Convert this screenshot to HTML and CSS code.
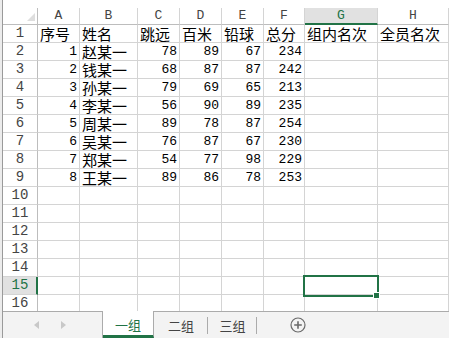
FILE: index.html
```html
<!DOCTYPE html>
<html>
<head>
  <title>Sheet</title>
  <link rel="stylesheet" href="styles.css">
</head>
<body>
  <div class="app">
    <div class="edge"></div>
    <div class="main">
      <div class="sheet">
        <div class="corner"><span class="tri"></span></div><div class="ch">A</div><div class="ch">B</div><div class="ch">C</div><div class="ch">D</div><div class="ch">E</div><div class="ch">F</div><div class="ch on">G</div><div class="ch">H</div>

        <div class="rh">1</div><div class="c t">序号</div><div class="c t">姓名</div><div class="c t">跳远</div><div class="c t">百米</div><div class="c t">铅球</div><div class="c t">总分</div><div class="c t">组内名次</div><div class="c t">全员名次</div>
        <div class="rh">2</div><div class="c n">1</div><div class="c t">赵某一</div><div class="c n">78</div><div class="c n">89</div><div class="c n">67</div><div class="c n">234</div><div class="c"></div><div class="c"></div>
        <div class="rh">3</div><div class="c n">2</div><div class="c t">钱某一</div><div class="c n">68</div><div class="c n">87</div><div class="c n">87</div><div class="c n">242</div><div class="c"></div><div class="c"></div>
        <div class="rh">4</div><div class="c n">3</div><div class="c t">孙某一</div><div class="c n">79</div><div class="c n">69</div><div class="c n">65</div><div class="c n">213</div><div class="c"></div><div class="c"></div>
        <div class="rh">5</div><div class="c n">4</div><div class="c t">李某一</div><div class="c n">56</div><div class="c n">90</div><div class="c n">89</div><div class="c n">235</div><div class="c"></div><div class="c"></div>
        <div class="rh">6</div><div class="c n">5</div><div class="c t">周某一</div><div class="c n">89</div><div class="c n">78</div><div class="c n">87</div><div class="c n">254</div><div class="c"></div><div class="c"></div>
        <div class="rh">7</div><div class="c n">6</div><div class="c t">吴某一</div><div class="c n">76</div><div class="c n">87</div><div class="c n">67</div><div class="c n">230</div><div class="c"></div><div class="c"></div>
        <div class="rh">8</div><div class="c n">7</div><div class="c t">郑某一</div><div class="c n">54</div><div class="c n">77</div><div class="c n">98</div><div class="c n">229</div><div class="c"></div><div class="c"></div>
        <div class="rh">9</div><div class="c n">8</div><div class="c t">王某一</div><div class="c n">89</div><div class="c n">86</div><div class="c n">78</div><div class="c n">253</div><div class="c"></div><div class="c"></div>
        <div class="rh">10</div><div class="c"></div><div class="c"></div><div class="c"></div><div class="c"></div><div class="c"></div><div class="c"></div><div class="c"></div><div class="c"></div>
        <div class="rh">11</div><div class="c"></div><div class="c"></div><div class="c"></div><div class="c"></div><div class="c"></div><div class="c"></div><div class="c"></div><div class="c"></div>
        <div class="rh">12</div><div class="c"></div><div class="c"></div><div class="c"></div><div class="c"></div><div class="c"></div><div class="c"></div><div class="c"></div><div class="c"></div>
        <div class="rh">13</div><div class="c"></div><div class="c"></div><div class="c"></div><div class="c"></div><div class="c"></div><div class="c"></div><div class="c"></div><div class="c"></div>
        <div class="rh">14</div><div class="c"></div><div class="c"></div><div class="c"></div><div class="c"></div><div class="c"></div><div class="c"></div><div class="c"></div><div class="c"></div>
        <div class="rh on">15</div><div class="c"></div><div class="c"></div><div class="c"></div><div class="c"></div><div class="c"></div><div class="c"></div><div class="c sel"><span class="handle"></span></div><div class="c"></div>
        <div class="rh">16</div><div class="c"></div><div class="c"></div><div class="c"></div><div class="c"></div><div class="c"></div><div class="c"></div><div class="c"></div><div class="c"></div>
      </div>

      <div class="tabs">
        <div class="nav">
          <svg width="5" height="8" viewBox="0 0 5 8"><path d="M5 0 L0 4 L5 8 Z" fill="#c8c8c8"/></svg>
          <svg width="5" height="8" viewBox="0 0 5 8"><path d="M0 0 L5 4 L0 8 Z" fill="#c8c8c8"/></svg>
        </div>
        <div class="tab active">一组</div>
        <div class="tab">二组</div>
        <div class="tab">三组</div>
        <div class="add">
          <svg width="16" height="16" viewBox="0 0 16 16">
            <circle cx="8" cy="8" r="7" fill="none" stroke="#6a6a6a" stroke-width="1.2"/>
            <path d="M8 4.2 V11.8 M4.2 8 H11.8" stroke="#6a6a6a" stroke-width="1.6"/>
          </svg>
        </div>
      </div>
    </div>
  </div>
</body>
</html>
```

FILE: styles.css
```css
body {
  margin: 0;
  background-color: white;
  font-family: "Noto Sans CJK SC", sans-serif;
}

.app {
  display: flex;
  width: 449px;
  height: 338px;
  overflow: hidden;
}

.edge {
  width: 2px;
  flex: none;
  background-color: #ececec;
  border-right: 1px solid #9a9a9a;
}

.main {
  flex: 1;
  display: flex;
  flex-direction: column;
  min-width: 0;
}

.sheet {
  height: 311px;
  padding-top: 8px;
  box-sizing: border-box;
  overflow: hidden;
  display: grid;
  grid-template-columns: 35px 42px 58px 42px 42px 42px 41px 73px 71px;
  grid-template-rows: 17px;
  grid-auto-rows: 18px;
}

.sheet > div {
  box-sizing: border-box;
  border-right: 1px solid #d4d4d4;
  border-bottom: 1px solid #d4d4d4;
  white-space: nowrap;
}

.corner {
  position: relative;
  border-bottom-color: #bdbdbd !important;
  border-right-color: #bdbdbd !important;
}

.tri {
  position: absolute;
  right: 2px;
  bottom: 3px;
  width: 0;
  height: 0;
  border-left: 8px solid transparent;
  border-bottom: 8px solid #dedede;
}

.ch {
  font-family: "Liberation Mono", monospace;
  font-size: 13px;
  line-height: 16px;
  text-align: center;
  color: #444;
  border-bottom-color: #bdbdbd !important;
}

.ch.on {
  background-color: #e1e1e1;
  color: #217346;
  border-bottom: 2px solid #217346 !important;
}

.rh {
  font-family: "Liberation Mono", monospace;
  font-size: 14px;
  line-height: 17px;
  text-align: center;
  color: #444;
  border-right-color: #bdbdbd !important;
}

.rh.on {
  background-color: #e1e1e1;
  color: #217346;
  border-right: 2px solid #217346 !important;
  padding-left: 1px;
}

.c {
  color: #000;
  line-height: 17px;
  padding: 0 2px;
}

.c.t {
  font-size: 15px;
}

.c.n {
  font-family: "Liberation Mono", monospace;
  font-size: 13px;
  text-align: right;
}

.sel {
  position: relative;
}

.sel::after {
  content: "";
  position: absolute;
  top: -2px;
  left: -2px;
  right: -2px;
  bottom: -3px;
  border: 2px solid #217346;
}

.handle {
  position: absolute;
  right: -3px;
  bottom: -5px;
  width: 5px;
  height: 5px;
  background-color: #217346;
  border: 1px solid white;
  z-index: 2;
}

.tabs {
  flex: 1;
  display: flex;
  align-items: stretch;
  background-color: #f3f3f3;
  font-size: 13px;
}

.nav {
  width: 100px;
  display: flex;
  align-items: center;
  justify-content: center;
  gap: 22px;
  border-top: 1px solid #ababab;
  border-right: 1px solid #ababab;
  padding-right: 6px;
  box-sizing: border-box;
}

.tab {
  display: flex;
  align-items: center;
  justify-content: center;
  color: #444;
  border-top: 1px solid #ababab;
  position: relative;
}

.tab:nth-child(3) {
  width: 54px;
}

.tab:nth-child(4) {
  width: 49px;
}

.tab:nth-child(3)::after,
.tab:nth-child(4)::after {
  content: "";
  position: absolute;
  right: 0;
  top: 5px;
  bottom: 4px;
  width: 1px;
  background-color: #ababab;
}

.tab.active {
  width: 51px;
  background-color: white;
  color: #217346;
  border-top: none;
  border-right: 1px solid #ababab;
  border-bottom: 3px solid #217346;
  box-sizing: border-box;
  padding-top: 2px;
}

.add {
  flex: 1;
  display: flex;
  align-items: center;
  padding-left: 33px;
  border-top: 1px solid #ababab;
}
```
